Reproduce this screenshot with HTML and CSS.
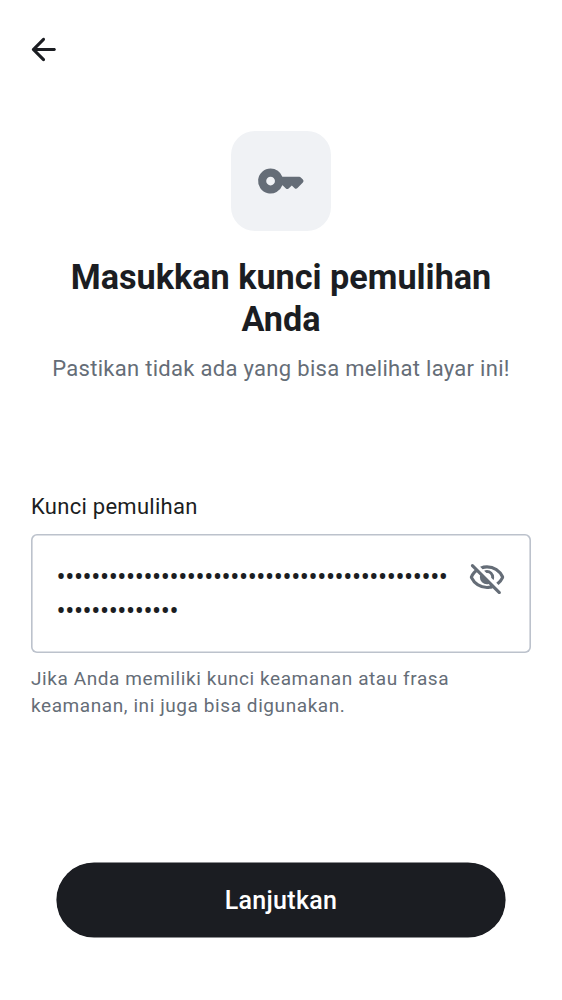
FILE: index.html
```html
<!DOCTYPE html>
<html lang="id">
<head>
<meta charset="utf-8">
<title>Kunci pemulihan</title>
<link rel="stylesheet" href="styles.css">
</head>
<body>
<main class="screen">
  <header class="topbar">
    <svg class="back" viewBox="0 0 24 24"><path d="m7.83 13 4.9 4.9c.2.2.29.43.29.7s-.11.5-.32.7c-.2.18-.43.28-.7.29a.93.93 0 0 1-.7-.29l-6.6-6.6a.9.9 0 0 1-.21-.33 1.1 1.1 0 0 1 0-.75.9.9 0 0 1 .21-.33l6.6-6.6a.95.95 0 0 1 .69-.27c.27 0 .51.09.71.27.2.2.3.44.3.71 0 .28-.1.52-.3.72L7.83 11H19c.28 0 .52.1.71.29.2.19.29.43.29.71s-.1.52-.29.71A.97.97 0 0 1 19 13z"/></svg>
  </header>
  <section class="hero">
    <div class="tile"><svg class="key" viewBox="0 0 24 24"><path fill-rule="evenodd" d="M7 6a6 6 0 0 1 5.65 4h8.1c.3 0 .55.1.75.3l1 1c.4.4.4 1 0 1.4l-2.6 2.7c-.4.4-.95.4-1.35.05L17.2 14.1l-1.55 1.45c-.4.35-.9.35-1.3 0L12.75 14h-.1A6 6 0 1 1 7 6m0 3.9a2.1 2.1 0 1 0 0 4.2 2.1 2.1 0 0 0 0-4.2"/></svg></div>
    <h1 class="title">Masukkan kunci pemulihan Anda</h1>
    <p class="subtitle">Pastikan tidak ada yang bisa melihat layar ini!</p>
  </section>
  <section class="form">
    <div class="label">Kunci pemulihan</div>
    <div class="field">
      <div class="dots">•••••••••••••••••••••••••••••••••••••••••••••<br>••••••••••••••</div>
      <svg class="eye" viewBox="0 0 24 24"><path d="m16.1 13.3-1.45-1.45q.225-1.175-.675-2.2t-2.325-.8L10.2 7.4q.424-.2.863-.3A4.2 4.2 0 0 1 12 7q1.875 0 3.188 1.312Q16.5 9.625 16.5 11.5q0 .5-.1.938t-.3.862m3.2 3.15-1.45-1.4a11 11 0 0 0 1.688-1.588A9 9 0 0 0 20.8 11.5q-1.25-2.524-3.588-4.012Q14.875 6 12 6q-.724 0-1.425.1a10 10 0 0 0-1.375.3L7.65 4.85A11.1 11.1 0 0 1 12 4q3.575 0 6.425 1.887T22.7 10.8a.8.8 0 0 1 .1.313q.025.188.025.387a2 2 0 0 1-.125.7 10.9 10.9 0 0 1-3.4 4.25m-.2 5.45-3.5-3.45q-.874.274-1.762.413Q12.95 19 12 19q-3.575 0-6.425-1.887T1.3 12.2a.8.8 0 0 1-.1-.312 3 3 0 0 1 0-.763.8.8 0 0 1 .1-.3Q1.825 9.7 2.55 8.75A13.3 13.3 0 0 1 4.15 7L2.075 4.9a.93.93 0 0 1-.275-.688q0-.412.3-.712a.95.95 0 0 1 .7-.275q.425 0 .7.275l17 17q.275.275.288.688a.93.93 0 0 1-.288.712.95.95 0 0 1-.7.275.95.95 0 0 1-.7-.275M5.55 8.4q-.725.65-1.325 1.425A9 9 0 0 0 3.2 11.5q1.25 2.524 3.588 4.012T12 17q.5 0 .975-.062.475-.063.975-.138l-.9-.95q-.274.075-.525.112A3.5 3.5 0 0 1 12 16q-1.875 0-3.187-1.312Q7.5 13.375 7.5 11.5q0-.274.037-.525.038-.25.113-.525z"/></svg>
    </div>
    <p class="help">Jika Anda memiliki kunci keamanan atau frasa<br>keamanan, ini juga bisa digunakan.</p>
  </section>
  <button class="submit">Lanjutkan</button>
</main>
</body>
</html>
```
FILE: styles.css
```css
* { box-sizing: border-box; }
body { margin: 0; background: #fff; font-family: Roboto, sans-serif; color: #1b1d22; }
.screen { height: 1000px; display: flex; flex-direction: column; padding: 0 31px; }
.topbar { height: 100px; display: flex; align-items: center; }
.back { width: 37px; height: 37px; margin-left: -6px; margin-top: -.4px; fill: #1b1d22; }
.hero { display: flex; flex-direction: column; align-items: center; padding-top: 31px; }
.tile { width: 100px; height: 100px; border-radius: 24px; background: #f0f2f5; display: flex; align-items: center; justify-content: center; }
.key { width: 50px; height: 50px; fill: #656d77; }
.title { margin: 25px 0 0; width: 440px; text-align: center; font-size: 34.2px; line-height: 42px; font-weight: 700; }
.subtitle { margin: 16px 0 0; font-size: 22px; line-height: 26px; letter-spacing: .3px; color: #656d77; white-space: nowrap; }
.form { padding-top: 111px; }
.label { font-size: 22px; line-height: 28px; letter-spacing: .27px; }
.field { margin-top: 13px; height: 119px; border-radius: 6px; box-shadow: inset 0 0 0 1.6px #bcc2cc; display: flex; padding: 26px 25px 0 25.5px; justify-content: space-between; }
.dots { font-size: 27px; line-height: 34px; letter-spacing: -.42px; white-space: nowrap; }
.eye { width: 38px; height: 38px; margin-top: -1px; fill: #656d77; flex: none; }
.help { margin: 12px 0 0; font-size: 19px; line-height: 27px; letter-spacing: .58px; color: #656d77; white-space: nowrap; }
.submit { margin: 144px 26px 0; height: 74px; padding: 2px 0 0; border: 0; border-radius: 38px; background: #1b1d22; box-shadow: 0 0 0 .6px #1b1d22; color: #fff; font: 500 25px/30px Roboto, sans-serif; letter-spacing: .3px; }
```
